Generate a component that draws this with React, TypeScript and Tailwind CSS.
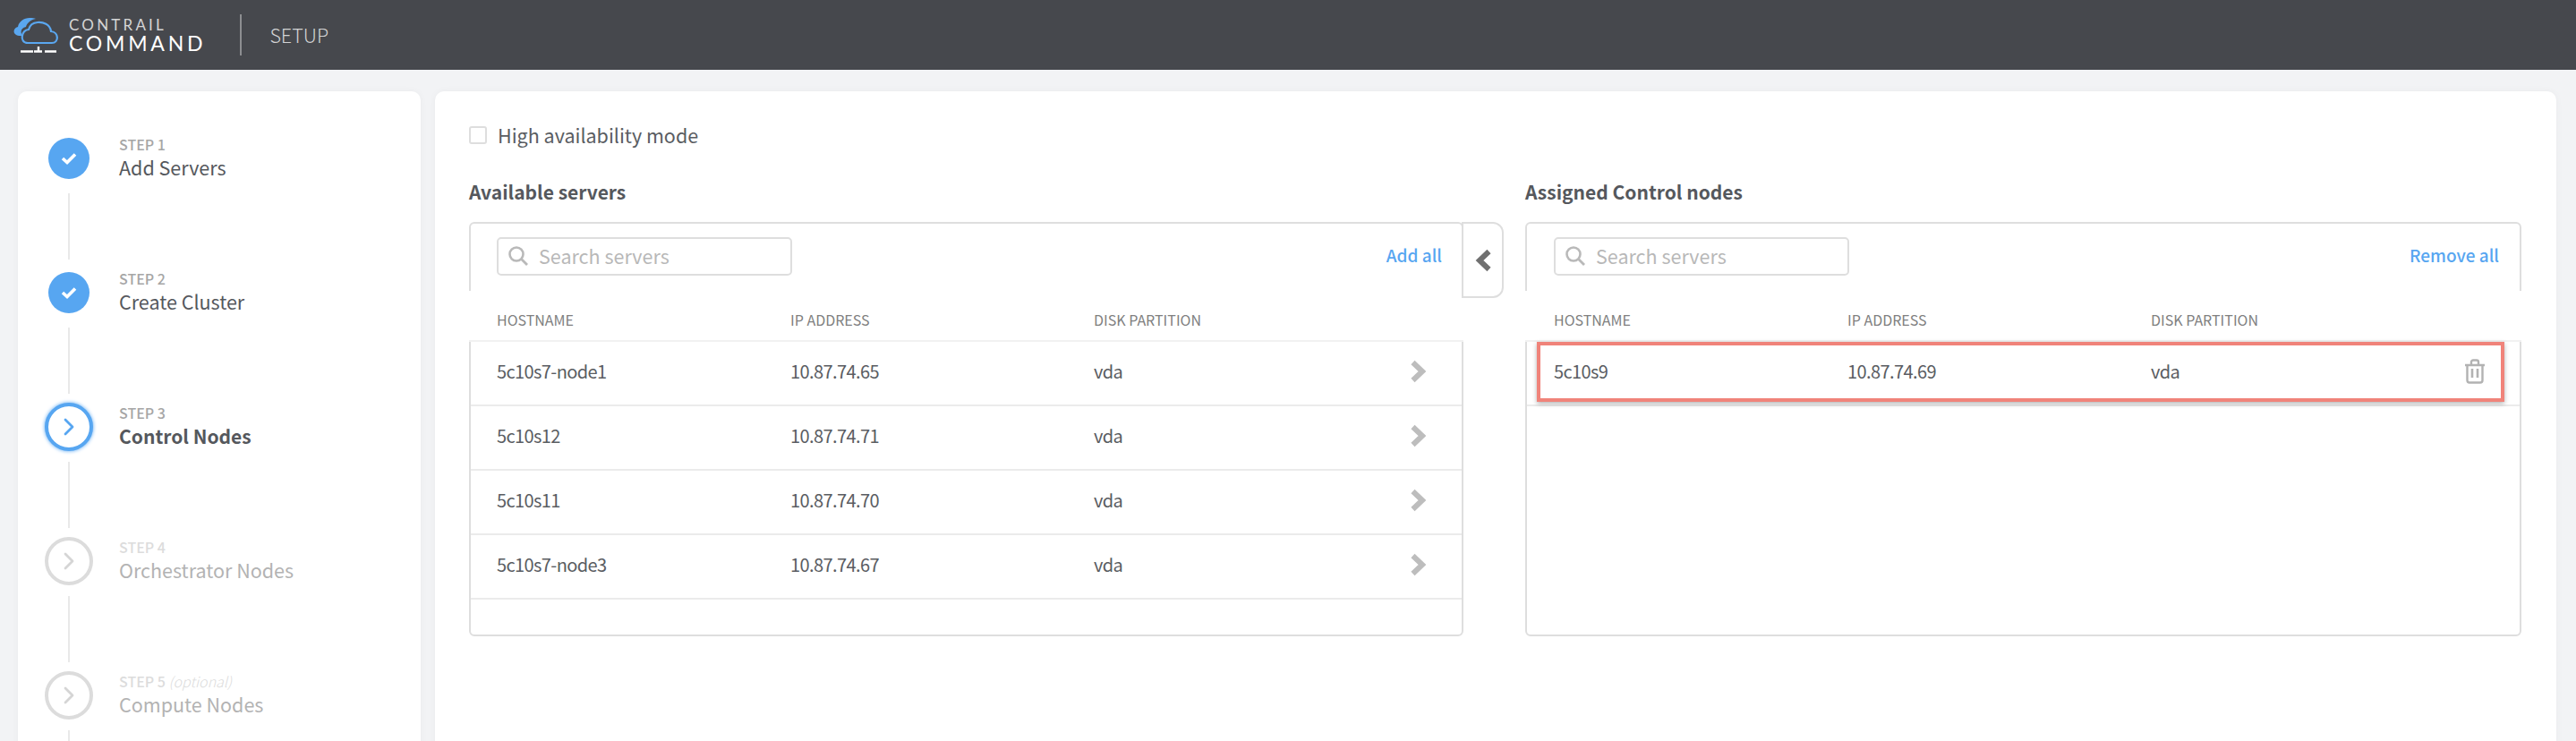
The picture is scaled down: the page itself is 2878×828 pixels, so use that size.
import React from "react";

const available = [
  ["5c10s7-node1", "10.87.74.65", "vda"],
  ["5c10s12", "10.87.74.71", "vda"],
  ["5c10s11", "10.87.74.70", "vda"],
  ["5c10s7-node3", "10.87.74.67", "vda"],
];

function Logo() {
  return (
    <svg width="55" height="45" viewBox="14 14 55 45" className="shrink-0">
      <path d="M25 37C14 38 13 29 20 27C21 21 27 17 33 17C36 17 38 17 40 18C34 19 30 23 29 27C24 28 22 32 25 37Z" fill="#5aa7f0" />
      <path d="M31 45H58C66 45 66 33 57 32C56 24 48 21.5 42 22C36 22.5 33 26 32 30C24 30 21 45 31 45Z" fill="none" stroke="#5aa7f0" strokeWidth="2.2" />
      <path d="M23 54.500H37M38 54.500H47M50 54.500H63M43 49V54" stroke="#fff" strokeWidth="2.4" />
    </svg>
  );
}

function Chevron({ color }: { color: string }) {
  return (
    <svg width="12" height="20" viewBox="0 0 12 20" fill="none">
      <path d="M2 2L10 10L2 18" stroke={color} strokeWidth="2.8" strokeLinecap="round" strokeLinejoin="round" />
    </svg>
  );
}

function Step({ n, title, state, optional }: { n: number; title: string; state: "done" | "active" | "todo"; optional?: boolean }) {
  const faded = state === "todo";
  return (
    <div className="flex flex-col h-[150px] shrink-0">
      <div className="flex items-center h-[54px]">
        <div className="w-[54px] flex justify-center shrink-0">
          {state === "done" && (
            <div className="w-[46px] h-[46px] rounded-full bg-[#57a6f1] flex items-center justify-center">
              <svg width="18" height="14" viewBox="0 0 18 14" fill="none">
                <path d="M2 7L7 11.500L16 2.500" stroke="#fff" strokeWidth="3.600" />
              </svg>
            </div>
          )}
          {state === "active" && (
            <div className="w-[54px] h-[54px] rounded-full border-[4px] border-[#57a6f1] bg-white flex items-center justify-center shadow-[0_0_4px_#57a6f1]">
              <Chevron color="#57a6f1" />
            </div>
          )}
          {state === "todo" && (
            <div className="w-[54px] h-[54px] rounded-full border-[4px] border-[#dcdcdc] bg-white flex items-center justify-center">
              <Chevron color="#d5d5d5" />
            </div>
          )}
        </div>
        <div className="ml-[29px] flex flex-col">
          <div className={`text-[16px] leading-[20px] font-medium ${faded ? "text-[#dcdcdc]" : "text-[#a6a6a6]"}`}>
            STEP {n}
            {optional && <span className="italic font-light"> (optional)</span>}
          </div>
          <div className={`leading-[32px] ${faded ? "text-[#b3b3b3]" : "text-[#55585d]"} ${state === "active" ? "text-[21px] font-semibold" : "text-[21.5px] font-normal"}`}>
            {title}
          </div>
        </div>
      </div>
      <div className="ml-[26px] mt-[12px] h-[74px] w-[2px] bg-[#e9e9e9]" />
    </div>
  );
}

function Search() {
  return (
    <div className="w-[330px] h-[43px] -mt-[3px] border-2 border-[#dedede] rounded-[5px] flex items-center pl-[10px] bg-white">
      <svg width="24" height="24" viewBox="0 0 24 24" fill="none" className="shrink-0">
        <circle cx="10" cy="10" r="7.500" stroke="#b9b9b9" strokeWidth="2.600" />
        <path d="M15.500 15.500L22 22" stroke="#b9b9b9" strokeWidth="2.800" />
      </svg>
      <span className="ml-[11px] text-[21.5px] leading-[28px] text-[#b8b8b8]">Search servers</span>
    </div>
  );
}

function Cells({ row }: { row: string[] }) {
  return (
    <>
      <div className="w-[328px]">{row[0]}</div>
      <div className="w-[339px]">{row[1]}</div>
      <div>{row[2]}</div>
    </>
  );
}

function TableHead({ right }: { right?: boolean }) {
  return (
    <div className={`-mx-[2px] bg-white flex items-center h-[57px] pt-[9px] border-b-2 border-[#f1f1f1] text-[16px] text-[#808080] ${right ? "pl-[32px]" : "pl-[31px]"}`}>
      <div className="w-[328px]">HOSTNAME</div>
      <div className="w-[339px]">IP ADDRESS</div>
      <div>DISK PARTITION</div>
    </div>
  );
}

export default function App() {
  return (
    <div className="w-[2878px] h-[828px] overflow-hidden bg-[#f2f3f5] font-['Noto_Sans_CJK_JP','Liberation_Sans',sans-serif] flex flex-col">
      <header className="h-[78px] shrink-0 bg-[#46484d] flex items-center pl-[14px]">
        <Logo />
        <div className="ml-[8px] flex flex-col font-['Lato',sans-serif]">
          <div className="text-[17px] leading-[19px] tracking-[3.2px] text-[#d5d5d5] font-normal">CONTRAIL</div>
          <div className="text-[23px] leading-[23px] tracking-[3.8px] text-white font-normal">COMMAND</div>
        </div>
        <div className="ml-[38px] w-[2px] h-[46px] bg-[#8d8e91]" />
        <div className="ml-[31px] text-[21.5px] leading-[30px] font-light text-[#d2d3d4]">SETUP</div>
      </header>
      <main className="flex-1 flex pl-[20px] pt-[24px] gap-[16px] min-h-0">
        <aside className="w-[450px] shrink-0 h-[760px] bg-white rounded-t-[10px] pt-[48px] pl-[30px] overflow-hidden shadow-[0_0_8px_rgba(0,0,0,0.04)]">
          <Step n={1} title="Add Servers" state="done" />
          <Step n={2} title="Create Cluster" state="done" />
          <Step n={3} title="Control Nodes" state="active" />
          <Step n={4} title="Orchestrator Nodes" state="todo" />
          <Step n={5} title="Compute Nodes" state="todo" optional />
        </aside>
        <section className="w-[2370px] shrink-0 h-[760px] bg-white rounded-t-[10px] pl-[38px] shadow-[0_0_8px_rgba(0,0,0,0.04)]">
          <label className="flex items-center h-[30px] mt-[34px]">
            <span className="w-[20px] h-[20px] border-2 border-[#dedede] rounded-[3px]" />
            <span className="ml-[12px] text-[21.5px] leading-[30px] text-[#5a5d62]">High availability mode</span>
          </label>
          <div className="flex mt-[32px]">
            <div className="w-[1158px] shrink-0">
              <h2 className="text-[21px] leading-[32px] font-semibold text-[#55585d]">Available servers</h2>
              <div className="flex mt-[18px]">
                <div className="w-[1111px] h-[463px] border-2 border-[#dedede] rounded-[6px] flex flex-col">
                  <div className="flex items-center justify-between h-[75px] pl-[29px] pr-[22px]">
                    <Search />
                    <a className="text-[19px] leading-[28px] text-[#57a6f1] font-medium -mt-[5px]">Add all</a>
                  </div>
                  <TableHead />
                  {available.map((row) => (
                    <div key={row[0]} className="flex items-center h-[72px] pb-[4px] pl-[29px] pr-[39px] border-b-2 border-[#ebebeb] text-[20px] tracking-[-0.6px] leading-[28px] text-[#5a5d62]">
                      <Cells row={row} />
                      <div className="ml-auto">
                        <svg width="18" height="26" viewBox="0 0 18 26" fill="none">
                          <path d="M2.500 3L13 13L2.500 23" stroke="#bdbdbd" strokeWidth="6" />
                        </svg>
                      </div>
                    </div>
                  ))}
                </div>
                <div className="w-[47px] h-[85px] -ml-[2px] border-2 border-[#dedede] rounded-r-[12px] flex items-center justify-center bg-white">
                  <svg width="18" height="26" viewBox="0 0 18 26" fill="none">
                    <path d="M15.500 3L5 13L15.500 23" stroke="#707070" strokeWidth="6" />
                  </svg>
                </div>
              </div>
            </div>
            <div className="ml-[22px] w-[1113px] shrink-0">
              <h2 className="text-[21px] leading-[32px] font-semibold text-[#55585d]">Assigned Control nodes</h2>
              <div className="relative mt-[18px] w-[1113px] h-[463px] border-2 border-[#dedede] rounded-[6px] flex flex-col">
                <div className="flex items-center justify-between h-[75px] pl-[30px] pr-[23px]">
                  <Search />
                  <a className="text-[19px] leading-[28px] text-[#57a6f1] font-medium -mt-[5px]">Remove all</a>
                </div>
                <TableHead right />
                <div className="flex items-center h-[72px] pb-[4px] pl-[30px] pr-[38px] border-b-2 border-[#ebebeb] text-[20px] tracking-[-0.6px] leading-[28px] text-[#5a5d62]">
                  <Cells row={["5c10s9", "10.87.74.69", "vda"]} />
                  <div className="ml-auto">
                    <svg width="24" height="28" viewBox="0 0 24 28" fill="none">
                      <path d="M1 7H23M8 7V3.500C8 2.500 9 1.500 10 1.500H14C15 1.500 16 2.500 16 3.500V7M3.500 7V24C3.500 25.500 4.500 26.500 6 26.500H18C19.500 26.500 20.500 25.500 20.500 24V7" stroke="#b2b2b2" strokeWidth="2.400" />
                      <path d="M9 11V21M15 11V21" stroke="#b2b2b2" strokeWidth="2.600" />
                    </svg>
                  </div>
                </div>
                <div className="absolute left-[11px] top-[132px] w-[1081px] h-[67px] border-[4px] border-[#f0837a] shadow-[0_2px_5px_rgba(0,0,0,0.3)] pointer-events-none" />
              </div>
            </div>
          </div>
        </section>
      </main>
    </div>
  );
}
